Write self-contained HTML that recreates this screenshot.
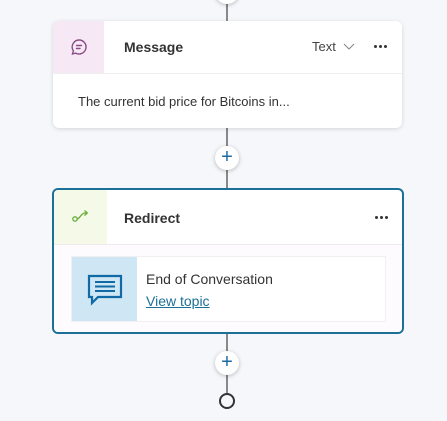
<!DOCTYPE html>
<html><head><style>
*{box-sizing:border-box;margin:0;padding:0}
body{width:447px;height:421px;background:#f5f7fa;font-family:"Liberation Sans",sans-serif;position:relative;overflow:hidden}
.line{position:absolute;left:226px;width:2px;background:#888}
.card{position:absolute;background:#fff;border-radius:6px;box-shadow:0 1px 4px rgba(0,0,0,.14);overflow:hidden}
.plus{position:absolute;width:24px;height:24px;border-radius:50%;background:#fff;box-shadow:0 1px 4px rgba(0,0,0,.25);color:#1c6aa0;font-size:20px;line-height:23px;text-align:center}
.title{position:absolute;font-size:14px;font-weight:bold;color:#333}
.dots{position:absolute;width:14px;height:3px}
.dots i{position:absolute;top:0;width:3px;height:3px;border-radius:50%;background:#333}
</style></head><body>
<div class="line" style="top:0;height:22px"></div>
<div style="position:absolute;left:215px;top:-20px;width:24px;height:24px;border-radius:50%;background:#fff;box-shadow:0 1px 4px rgba(0,0,0,.25)"></div>
<div class="line" style="top:128px;height:62px"></div>
<div class="line" style="top:333px;height:60px"></div>

<div class="card" style="left:53px;top:21px;width:349px;height:107px">
  <div style="position:absolute;left:0;top:0;width:51px;height:52px;background:#f6e9f5"></div>
  <svg style="position:absolute;left:16px;top:16px" width="20" height="20" viewBox="0 0 20 20"><path d="M10 3a7 7 0 1 1-3.4 13.1L3.5 17l.9-3.1A7 7 0 0 1 10 3z" fill="none" stroke="#8a4d86" stroke-width="1.4"/><path d="M7.5 8.5h5M7.5 11.5h3.5" stroke="#8a4d86" stroke-width="1.4" stroke-linecap="round"/></svg>
  <div class="title" style="left:71px;top:18px">Message</div>
  <div style="position:absolute;left:259px;top:18px;font-size:13px;color:#444">Text</div>
  <svg style="position:absolute;left:290px;top:22px" width="12" height="8" viewBox="0 0 12 8"><path d="M1 1l5 5 5-5" fill="none" stroke="#888" stroke-width="1.1"/></svg>
  <div class="dots" style="left:321px;top:24px"><i style="left:0"></i><i style="left:5px"></i><i style="left:10px"></i></div>
  <div style="position:absolute;left:0;top:52px;width:100%;height:1px;background:#eee"></div>
  <div style="position:absolute;left:25px;top:73px;font-size:13px;color:#333">The current bid price for Bitcoins in...</div>
</div>
<div class="plus" style="left:215px;top:146px">+</div>

<div class="card" style="left:52px;top:188px;width:352px;height:146px;border:2px solid #1c6f97;box-shadow:none">
  <div style="position:absolute;left:0;top:0;width:53px;height:54px;background:#f4f9e8"></div>
  <svg style="position:absolute;left:17px;top:18px" width="20" height="16" viewBox="0 0 20 16"><circle cx="4" cy="11" r="2.2" fill="none" stroke="#6aae3a" stroke-width="1.3"/><path d="M6 11c3 0 4-6 8-6h2M13.5 2.5L16.3 5l-2.8 2.5" fill="none" stroke="#6aae3a" stroke-width="1.3"/></svg>
  <div class="title" style="left:70px;top:20px">Redirect</div>
  <div class="dots" style="left:321px;top:26px"><i style="left:0"></i><i style="left:5px"></i><i style="left:10px"></i></div>
  <div style="position:absolute;left:0;top:54px;width:100%;height:92px;background:#fdfbfd;border-top:1px solid #f1e8ee"></div>
  <div style="position:absolute;left:17px;top:66px;width:315px;height:66px;background:#fff;border:1px solid #f0f0f0">
    <div style="position:absolute;left:0;top:0;width:65px;height:64px;background:#cfe6f4"></div>
    <svg style="position:absolute;left:15px;top:17px" width="36" height="32" viewBox="0 0 36 32"><path d="M2 2h32v21H11l-6 6v-6H2z" fill="none" stroke="#0f6aa5" stroke-width="2.2"/><path d="M8 8h20M8 12.5h20M8 17h20" stroke="#0f6aa5" stroke-width="2"/></svg>
    <div style="position:absolute;left:74px;top:14px;font-size:14px;color:#333">End of Conversation</div>
    <div style="position:absolute;left:74px;top:36px;font-size:14px;color:#1c6f97;text-decoration:underline">View topic</div>
  </div>
</div>
<div class="plus" style="left:215px;top:351px">+</div>
<div style="position:absolute;left:219px;top:393px;width:16px;height:16px;border-radius:50%;border:2px solid #333;background:#f5f7fa"></div>
</body></html>
